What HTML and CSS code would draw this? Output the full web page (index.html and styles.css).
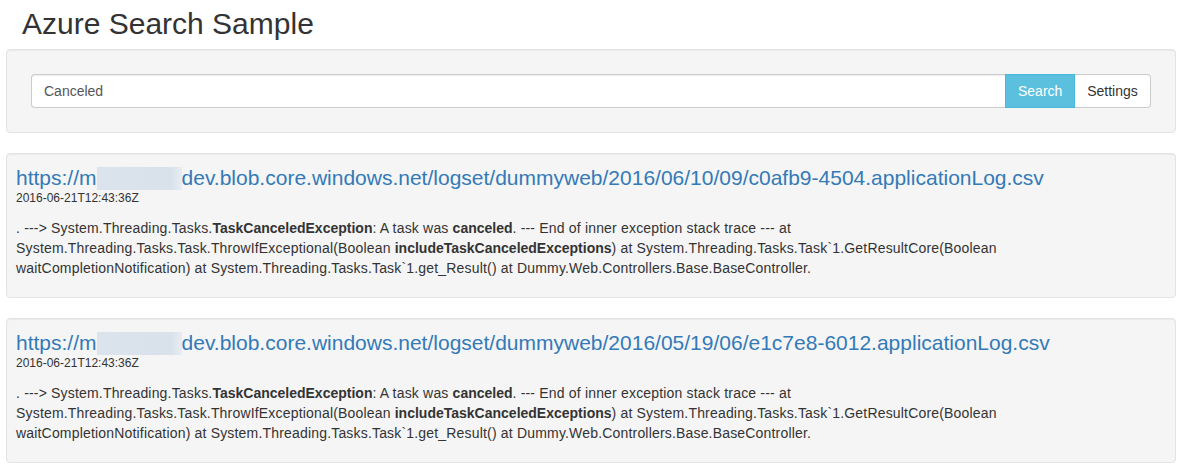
FILE: index.html
```html
<!DOCTYPE html>
<html lang="en">
<head>
<meta charset="utf-8">
<title>Azure Search Sample</title>
<link rel="stylesheet" href="styles.css">
</head>
<body>
<div class="container">
  <h2 class="title">Azure Search Sample</h2>
  <div class="well search-well">
    <form class="search-form">
      <input class="search-input" type="text" value="Canceled">
      <button type="button" class="btn btn-info">Search</button>
      <button type="button" class="btn btn-default">Settings</button>
    </form>
  </div>

  <div class="well result">
    <a class="result-link" href="#">https://m<span class="redact"></span>dev.blob.core.windows.net/logset/dummyweb/2016/06/10/09/c0afb9-4504.applicationLog.csv</a>
    <div class="result-date">2016-06-21T12:43:36Z</div>
    <p class="result-text">. ---&gt; System.Threading.Tasks.<b>TaskCanceledException</b>: A task was <b>canceled</b>. --- End of inner exception stack trace --- at<br>System.Threading.Tasks.Task.ThrowIfExceptional(Boolean <b>includeTaskCanceledExceptions</b>) at System.Threading.Tasks.Task`1.GetResultCore(Boolean<br>waitCompletionNotification) at System.Threading.Tasks.Task`1.get_Result() at Dummy.Web.Controllers.Base.BaseController.</p>
  </div>

  <div class="well result">
    <a class="result-link" href="#">https://m<span class="redact"></span>dev.blob.core.windows.net/logset/dummyweb/2016/05/19/06/e1c7e8-6012.applicationLog.csv</a>
    <div class="result-date">2016-06-21T12:43:36Z</div>
    <p class="result-text">. ---&gt; System.Threading.Tasks.<b>TaskCanceledException</b>: A task was <b>canceled</b>. --- End of inner exception stack trace --- at<br>System.Threading.Tasks.Task.ThrowIfExceptional(Boolean <b>includeTaskCanceledExceptions</b>) at System.Threading.Tasks.Task`1.GetResultCore(Boolean<br>waitCompletionNotification) at System.Threading.Tasks.Task`1.get_Result() at Dummy.Web.Controllers.Base.BaseController.</p>
  </div>
</div>
</body>
</html>
```

FILE: styles.css
```css
* { box-sizing: border-box; }
html, body {
  margin: 0;
  padding: 0;
  background: #fff;
}
body {
  font-family: "Liberation Sans", Arial, Helvetica, sans-serif;
  font-size: 14px;
  line-height: 1.42857;
  color: #333;
}
.container {
  width: 1170px;
  margin: 0 0 0 6px;
}
.title {
  font-size: 30px;
  font-weight: 400;
  line-height: 33px;
  margin: 7px 0 9px;
  padding-left: 16px;
  color: #333;
}
.well {
  background: #f5f5f5;
  border: 1px solid #e3e3e3;
  border-radius: 4px;
  box-shadow: inset 0 1px 1px rgba(0,0,0,.05);
  margin-bottom: 20px;
}
.search-well {
  padding: 24px;
}
.search-form {
  display: flex;
  margin: 0;
}
.search-input {
  flex: 1;
  height: 34px;
  padding: 6px 12px;
  font-family: inherit;
  font-size: 14px;
  color: #555;
  background: #fff;
  border: 1px solid #ccc;
  border-right: 0;
  border-radius: 4px 0 0 4px;
  box-shadow: inset 0 1px 1px rgba(0,0,0,.075);
  outline: none;
}
.btn {
  height: 34px;
  padding: 6px 12px;
  font-family: inherit;
  font-size: 14px;
  line-height: 20px;
  border: 1px solid;
  cursor: pointer;
}
.btn-info {
  width: 70px;
  background: #5bc0de;
  border-color: #46b8da;
  color: #fff;
  border-radius: 0;
}
.btn-default {
  width: 76px;
  background: #fff;
  border-color: #ccc;
  color: #333;
  border-left: 0;
  border-radius: 0 4px 4px 0;
}
.result {
  padding: 12px 9px 19px;
}
.result-link {
  display: block;
  font-size: 21px;
  line-height: 24px;
  color: #337ab7;
  text-decoration: none;
  white-space: nowrap;
}
.redact {
  display: inline-block;
  width: 85px;
  height: 23px;
  vertical-align: -5px;
  background: linear-gradient(90deg, #dbe3ec 0%, #d9e2eb 88%, #e8edf2 100%);
}
.result-date {
  font-size: 12px;
  line-height: 17px;
}
.result-text {
  margin: 11px 0 0;
  font-size: 14px;
  line-height: 20px;
  letter-spacing: 0.18px;
  white-space: nowrap;
}
.result-text b {
  font-weight: 700;
  letter-spacing: 0;
}
```
